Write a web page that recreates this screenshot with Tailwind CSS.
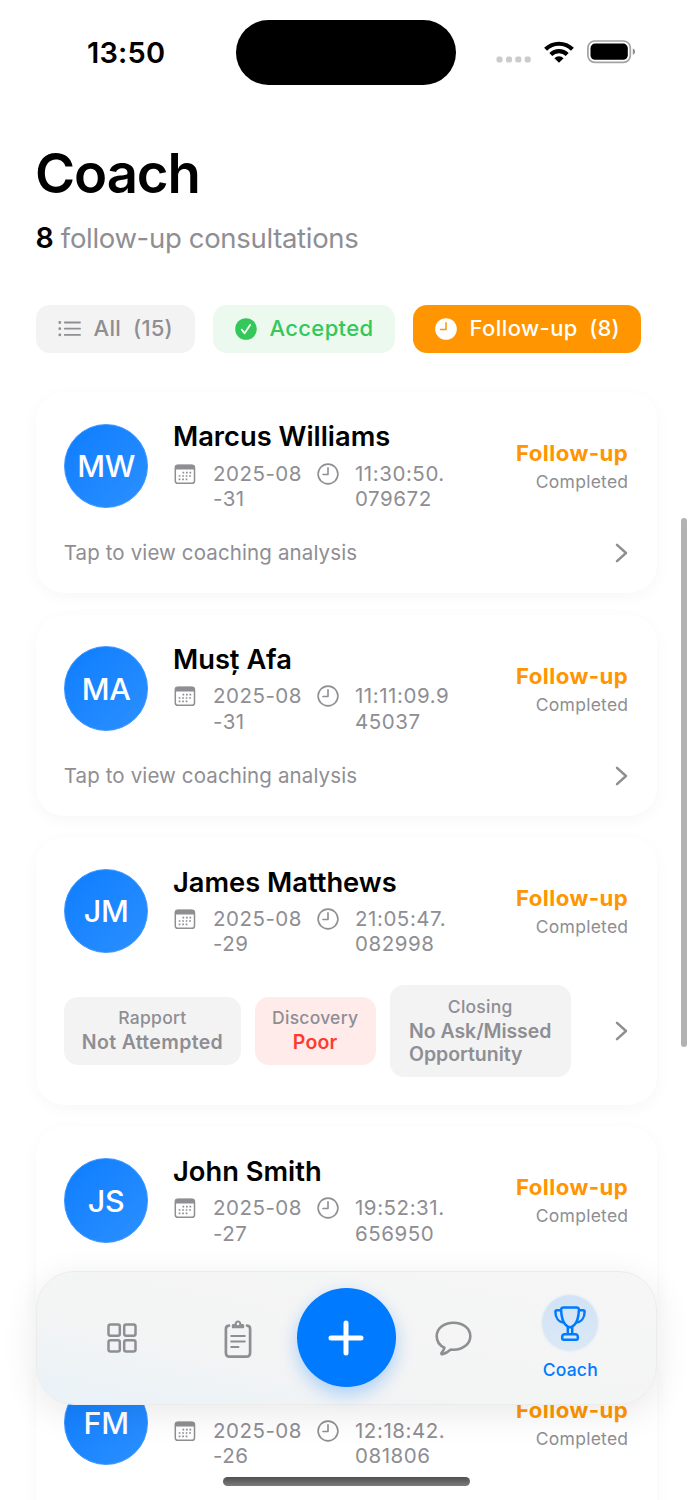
<!DOCTYPE html>
<html lang="en">
<head>
    <meta charset="UTF-8">
    <meta name="viewport" content="width=device-width, initial-scale=1.0">
    <title>Coach</title>
    <script src="https://cdn.jsdelivr.net/npm/@tailwindcss/browser@4"></script>
</head>
<body class="bg-white overflow-hidden">
    <div class="relative w-[693px] h-[1500px] overflow-hidden bg-white text-black font-['Inter',sans-serif] whitespace-nowrap">

        <!-- Status bar -->
        <div class="flex items-center h-[104px] pl-[86px] pr-[57.5px]">
            <div class="w-[150px] pl-[1px] text-[29px] font-semibold leading-none tracking-[0.2px]">13:50</div>
            <div class="w-[220px] h-[65px] rounded-full bg-black"></div>
            <div class="flex items-center ml-auto">
                <svg class="mt-[15px] mr-[12px]" width="36" height="7" viewBox="0 0 36 7" fill="#cbcbcb">
                    <rect x="0.5" y="0.5" width="6" height="6" rx="2"/>
                    <rect x="10" y="0.5" width="6" height="6" rx="2"/>
                    <rect x="19.3" y="0.5" width="6" height="6" rx="2"/>
                    <rect x="28.7" y="0.5" width="6" height="6" rx="2"/>
                </svg>
                <svg class="mr-[12.5px] mb-[1px]" width="30" height="22" viewBox="0 0 30 22" fill="none" stroke="#000" stroke-width="4.2">
                    <path d="M1.6 8.2A19.2 19.2 0 0 1 28.4 8.2"/>
                    <path d="M6.8 13.5A11.8 11.8 0 0 1 23.2 13.5"/>
                    <path d="M15 21.8L10.4 17.2A6.6 6.6 0 0 1 19.6 17.2Z" fill="#000" stroke="none"/>
                </svg>
                <svg width="49" height="24" viewBox="0 0 49 24">
                    <rect x="0.9" y="1" width="42.4" height="21.4" rx="6.8" fill="none" stroke="#a3a3a3" stroke-width="1.7"/>
                    <rect x="3.5" y="3.6" width="37.3" height="16.2" rx="4.6" fill="#000"/>
                    <path d="M45.8 8.6c1.5.6 2.3 1.7 2.3 3.1s-.8 2.5-2.3 3.1z" fill="#8e8e8e"/>
                </svg>
            </div>
        </div>

        <!-- Heading -->
        <div class="pl-[35.5px] pt-[37px]">
            <h1 class="-ml-[0.5px] text-[54.5px] leading-[64px] font-semibold tracking-[-1.1px]">Coach</h1>
            <p class="mt-[16px] text-[27.5px] leading-[34px] tracking-[-0.32px] text-[#8e8e93]"><span class="text-[28.5px] font-semibold text-black">8</span> follow-up consultations</p>
        </div>

        <!-- Filters -->
        <div class="flex gap-[18px] pl-[35.5px] mt-[49.5px] text-[22px] font-medium">
            <div class="flex items-center w-[159px] h-[48px] pl-[22px] rounded-[14px] bg-[#f3f3f3] text-[#8e8e93]">
                <svg width="23" height="18" viewBox="0 0 23 18" fill="none" stroke="#8e8e93" stroke-width="1.8" stroke-linecap="round">
                    <path d="M6.8 2.5H22M6.8 8.7H22M6.8 14.9H22"/>
                    <path d="M1.8 2.5h.01M1.8 8.7h.01M1.8 14.9h.01" stroke-width="2.8"/>
                </svg>
                <span class="ml-[13px] tracking-[0.3px]">All</span>
                <span class="ml-[12px] tracking-[0.2px]">(15)</span>
            </div>
            <div class="flex items-center w-[182px] h-[48px] pl-[22px] rounded-[14px] bg-[#ebf9ee] text-[#34c759]">
                <svg width="22" height="22" viewBox="0 0 22 22">
                    <circle cx="11" cy="11" r="10.8" fill="#34c759"/>
                    <path d="M6.7 11.7l3 3.6 5.4-8.3" fill="none" stroke="#fff" stroke-width="1.8" stroke-linecap="round" stroke-linejoin="round"/>
                </svg>
                <span class="ml-[13px] tracking-[0.35px]">Accepted</span>
            </div>
            <div class="flex items-center w-[228.5px] h-[48px] pl-[22px] rounded-[14px] bg-[#ff9500] text-white">
                <svg width="22" height="22" viewBox="0 0 22 22">
                    <circle cx="11" cy="11" r="10.8" fill="#fff"/>
                    <path d="M11 4.8V11.5H5.5" fill="none" stroke="#ff9500" stroke-width="1.5" stroke-linecap="round" stroke-linejoin="round"/>
                </svg>
                <span class="ml-[13px] tracking-[0.4px]">Follow-up</span>
                <span class="ml-[11.5px] tracking-[0.1px]">(8)</span>
            </div>
        </div>

        <!-- Consultations -->
        <div id="cards" class="flex flex-col gap-[21.2px] px-[36px] mt-[39.5px]"></div>

        <!-- Scroll indicator -->
        <div class="absolute left-[681px] top-[518px] w-[5.5px] h-[529px] rounded-full bg-[#b2b2b2]"></div>

        <!-- Tab bar -->
        <div class="absolute left-[36px] top-[1271px] w-[620.5px] h-[133.5px] flex items-center justify-center rounded-[38px] border border-[#ececed] bg-linear-to-tr from-[#e9f2f8] via-[#f3f4f4] via-35% to-[#f6f6f6] shadow-[0_8px_36px_rgba(0,0,0,0.09)]">
            <div class="flex justify-center w-[116.5px] pr-[1px]">
                <svg width="30" height="30" viewBox="0 0 30 30" fill="none" stroke="#8e8e93" stroke-width="2.5">
                    <rect x="1.5" y="1.5" width="11.3" height="11.3" rx="2"/>
                    <rect x="17.2" y="1.5" width="11.3" height="11.3" rx="2"/>
                    <rect x="1.5" y="17.2" width="11.3" height="11.3" rx="2"/>
                    <rect x="17.2" y="17.2" width="11.3" height="11.3" rx="2"/>
                </svg>
            </div>
            <div class="flex justify-center w-[116.5px] pr-[1px]">
                <svg class="mt-[3px]" width="28" height="39" viewBox="0 0 28 39" fill="none" stroke="#8e8e93" stroke-linecap="round" stroke-linejoin="round">
                    <path d="M5 5.6C2.5 5.8 1.9 6.8 1.9 9V32.8C1.9 35.6 3 36.7 5.8 36.7H22.2C25 36.7 26.1 35.6 26.1 32.8V9C26.1 6.8 25.5 5.8 23 5.6" stroke-width="2.7"/>
                    <path d="M9 8.3C8.2 8.3 7.8 7.8 7.8 7V5.6C7.8 4.5 8.4 4 9.5 4H10.6C10.8 2 12.2.6 14 .6S17.2 2 17.4 4H18.5C19.6 4 20.2 4.5 20.2 5.6V7C20.2 7.8 19.8 8.3 19 8.3Z" fill="#8e8e93" stroke="none"/>
                    <circle cx="14" cy="3.9" r="1.3" fill="#f4f5f5" stroke="none"/>
                    <path d="M7.2 16H20.8M7.2 21.4H20.8M7.2 27.1H14.5" stroke-width="2"/>
                </svg>
            </div>
            <div class="flex items-center justify-center w-[98.6px] h-[98.6px] rounded-full bg-[#007aff] shadow-[0_7px_18px_rgba(0,122,255,0.3)]">
                <svg width="36" height="36" viewBox="0 0 36 36" fill="none" stroke="#fff" stroke-width="5" stroke-linecap="round">
                    <path d="M18 3V33M3 18H33"/>
                </svg>
            </div>
            <div class="flex justify-center w-[116.5px] pr-[1px]">
                <svg class="mt-[1px]" width="37" height="35" viewBox="0 0 37 35" fill="none" stroke="#8e8e93" stroke-width="2.6" stroke-linejoin="round">
                    <path d="M18.5 1.7C28 1.7 35.3 7.6 35.3 15.2S28 28.7 18.5 28.7C17.5 28.7 16.6 28.6 15.8 28.5C13.5 30.5 10.3 32.5 7.6 33.2C6.5 33.4 6 32.7 6.6 31.9C7.9 30.3 9 28.4 9.4 26.7C4.5 24.3 1.7 20.2 1.7 15.2C1.7 7.6 9 1.7 18.5 1.7Z"/>
                </svg>
            </div>
            <div class="flex flex-col items-center w-[116.5px]">
                <div class="flex items-center justify-center w-[56px] h-[56px] rounded-full bg-linear-to-b from-[#d1e3f6] to-[#dbe8f5] shadow-[0_0_3px_#d9e7f5]">
                    <svg class="mt-[2px]" width="32" height="36" viewBox="0 0 32 36" fill="none" stroke="#007aff" stroke-width="2.5" stroke-linejoin="round">
                        <path d="M9.5 1.5H22.5C24.2 1.5 25 2.3 24.9 3.9C24.6 11 23.5 15.5 20.8 18.3C18.8 20.3 17.8 21.3 16 21.3S13.2 20.3 11.2 18.3C8.5 15.5 7.4 11 7.1 3.9C7 2.3 7.8 1.5 9.5 1.5Z"/>
                        <path d="M7.2 4.3H2.9C1.9 4.3 1.4 4.7 1.4 5.7C1.4 11.5 4.5 16 9.7 16.5M24.8 4.3H29.1C30.1 4.3 30.6 4.7 30.6 5.7C30.6 11.5 27.5 16 22.3 16.5"/>
                        <path d="M13.8 21V28M18.2 21V28M10.5 28.2H21.5C22.6 28.2 23.8 29.3 23.8 30.7V32.6C23.8 33.4 23.5 33.7 22.7 33.7H9.3C8.500 33.7 8.2 33.4 8.2 32.6V30.7C8.2 29.3 9.4 28.2 10.5 28.2Z"/>
                    </svg>
                </div>
                <span class="mt-[8px] text-[17.5px] leading-[22px] font-medium tracking-[0.2px] text-[#007aff]">Coach</span>
            </div>
        </div>

        <!-- Home indicator -->
        <div class="absolute left-[223px] top-[1477px] w-[246.5px] h-[9px] rounded-full bg-linear-to-b from-[#505050] to-[#7c7c7c]"></div>
    </div>

    <script>
        const consultations = [
            { initials: 'MW', name: 'Marcus Williams', date: ['2025-08', '-31'], time: ['11:30:50.', '079672'], hint: 'Tap to view coaching analysis' },
            { initials: 'MA', name: 'Musț Afa', date: ['2025-08', '-31'], time: ['11:11:09.9', '45037'], hint: 'Tap to view coaching analysis' },
            { initials: 'JM', name: 'James Matthews', date: ['2025-08', '-29'], time: ['21:05:47.', '082998'], scores: [
                { label: 'Rapport', value: 'Not Attempted', width: 176.5, color: 'bg-[#f3f3f3] text-[#8e8e93] tracking-[0.35px]' },
                { label: 'Discovery', value: 'Poor', width: 121, color: 'bg-[#ffebea] text-[#ff3b30] tracking-[0.2px]' },
                { label: 'Closing', value: 'No Ask/Missed<br>Opportunity', width: 181, color: 'bg-[#f3f3f3] text-[#8e8e93] tracking-[-0.05px]' }
            ] },
            { initials: 'JS', name: 'John Smith', date: ['2025-08', '-27'], time: ['19:52:31.', '656950'] },
            { initials: 'FM', name: '', date: ['2025-08', '-26'], time: ['12:18:42.', '081806'] }
        ];

        const calendarIcon = `
            <svg class="mt-[3px]" width="22" height="21" viewBox="0 0 22 21" fill="none" stroke="#8e8e93">
                <rect x="1.3" y="1.3" width="19.2" height="18" rx="2.6" stroke-width="1.5"/>
                <path d="M1 5.5V3.5C1 1.8 2 .8 3.6 .8H18.2C19.8 .8 20.8 1.8 20.8 3.5V5.5Z" fill="#8e8e93" stroke="none"/>
                <path d="M8.5 8.7H18M4.7 12H18M4.7 15.3H14.5" stroke-width="1.7" stroke-dasharray="1.7 1.8"/>
            </svg>`;

        const clockIcon = `
            <svg class="mt-[2px]" width="22" height="22" viewBox="0 0 22 22" fill="none" stroke="#8e8e93" stroke-width="1.6" stroke-linecap="round" stroke-linejoin="round">
                <circle cx="11" cy="11" r="9.9"/>
                <path d="M11 4.8V11.5H6"/>
            </svg>`;

        const chevron = `
            <svg class="ml-auto" width="13" height="20" viewBox="0 0 13 20" fill="none" stroke="#8e8e93" stroke-width="2.5" stroke-linecap="round" stroke-linejoin="round">
                <path d="M2 1.8L11 10L2 18.2"/>
            </svg>`;

        function renderScores(scores) {
            return scores.map(score => `
                <div class="flex flex-col items-center justify-center gap-[3px] py-[10.5px] rounded-[14px] ${score.color}" style="width: ${score.width}px">
                    <span class="text-[17.5px] leading-[21px] font-medium tracking-[0.25px] text-[#8e8e93]">${score.label}</span>
                    <span class="text-[19.5px] leading-[23.3px] font-semibold">${score.value}</span>
                </div>`).join('');
        }

        function renderFooter(c) {
            if (c.scores) {
                return `<div class="flex items-center gap-[14px] mt-[28.7px] mb-[0.5px]">${renderScores(c.scores)}${chevron}</div>`;
            }
            if (c.hint) {
                return `
                    <div class="flex items-center h-[28px] mt-[28px] -mb-[2px]">
                        <span class="-ml-[0.5px] text-[20.5px] leading-[26px] tracking-[0.12px] text-[#8e8e93]">${c.hint}</span>
                        ${chevron}
                    </div>`;
            }
            return '';
        }

        document.getElementById('cards').innerHTML = consultations.map(c => `
            <div class="w-[620.5px] min-h-[201.1px] shrink-0 p-[28.2px] rounded-[28px] bg-white shadow-[0_4px_16px_rgba(0,0,0,0.035)]">
                <div class="flex items-center h-[91px] pt-[0.5px]">
                    <div class="flex items-center justify-center w-[84px] h-[84.5px] rounded-full border-[1.5px] border-[#3d98ff] bg-linear-to-br from-[#0a7dff] to-[#2b90ff] bg-origin-border text-white text-[30.5px] font-medium tracking-[-0.3px]">${c.initials}</div>
                    <div class="ml-[24.8px]">
                        <div class="h-[34px] text-[27.3px] leading-[34px] font-semibold">${c.name}</div>
                        <div class="flex items-start mt-[6.5px] ml-[1px] text-[20.5px] leading-[25.3px] text-[#8e8e93]">
                            ${calendarIcon}
                            <div class="ml-[17px] w-[104px] tracking-[0.5px]">${c.date.join('<br>')}</div>
                            ${clockIcon}
                            <div class="ml-[16px] tracking-[0.55px]">${c.time.join('<br>')}</div>
                        </div>
                    </div>
                    <div class="flex flex-col items-end gap-[4px] ml-auto">
                        <div class="text-[22.2px] leading-[28px] font-bold tracking-[0.45px] text-[#ff9500]">Follow-up</div>
                        <div class="text-[17.5px] leading-[22px] tracking-[0.25px] text-[#8e8e93]">Completed</div>
                    </div>
                </div>
                ${renderFooter(c)}
            </div>`).join('');
    </script>
</body>
</html>
